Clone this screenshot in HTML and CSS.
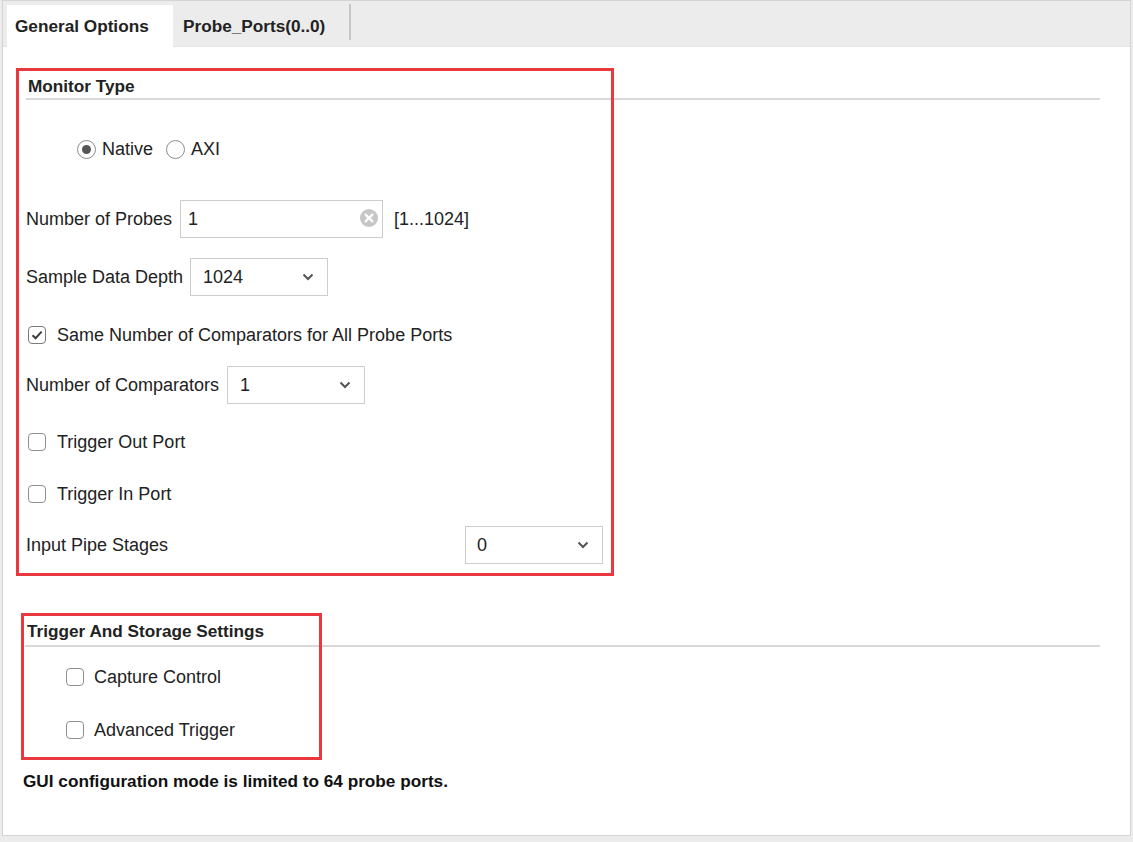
FILE: index.html
```html
<!DOCTYPE html>
<html lang="en">
<head>
<meta charset="utf-8">
<title>General Options</title>
<link rel="stylesheet" href="styles.css">
</head>
<body>
<div class="window">
  <div class="tabstrip">
    <div class="tab tab-active">General Options</div>
    <div class="tab tab-probes">Probe_Ports(0..0)</div>
    <div class="tab-sep"></div>
  </div>

  <div class="content">
    <section class="group group-monitor">
      <div class="group-title">Monitor Type</div>
      <div class="group-rule"></div>

      <div class="row row-radio">
        <span class="radio radio-on"></span><span class="radio-label">Native</span>
        <span class="radio radio-axi"></span><span class="radio-label">AXI</span>
      </div>

      <div class="row row-probes">
        <span class="label label-probes">Number of Probes</span>
        <div class="textbox">
          <span class="textbox-value">1</span>
          <svg class="clear-icon" width="18" height="18" viewBox="0 0 18 18">
            <circle cx="9" cy="9" r="9" fill="#c6c6c6"/>
            <path d="M5.6 5.6 L12.4 12.4 M12.4 5.6 L5.6 12.4" stroke="#fff" stroke-width="2.2" stroke-linecap="round"/>
          </svg>
        </div>
        <span class="range">[1...1024]</span>
      </div>

      <div class="row row-depth">
        <span class="label label-depth">Sample Data Depth</span>
        <div class="select"><span>1024</span>
          <svg class="chev" width="12" height="8" viewBox="0 0 12 8"><path d="M1.5 1.5 L6 6 L10.5 1.5" fill="none" stroke="#555" stroke-width="2"/></svg>
        </div>
      </div>

      <div class="row row-same">
        <span class="checkbox checkbox-on">
          <svg width="14" height="14" viewBox="0 0 14 14"><path d="M2.5 7.2 L5.6 10.2 L11.6 3.6" fill="none" stroke="#3d3d3d" stroke-width="2"/></svg>
        </span>
        <span class="check-label">Same Number of Comparators for All Probe Ports</span>
      </div>

      <div class="row row-comp">
        <span class="label label-comp">Number of Comparators</span>
        <div class="select"><span>1</span>
          <svg class="chev" width="12" height="8" viewBox="0 0 12 8"><path d="M1.5 1.5 L6 6 L10.5 1.5" fill="none" stroke="#555" stroke-width="2"/></svg>
        </div>
      </div>

      <div class="row row-tout">
        <span class="checkbox"></span>
        <span class="check-label">Trigger Out Port</span>
      </div>

      <div class="row row-tin">
        <span class="checkbox"></span>
        <span class="check-label">Trigger In Port</span>
      </div>

      <div class="row row-pipe">
        <span class="label">Input Pipe Stages</span>
        <div class="select select-pipe"><span>0</span>
          <svg class="chev" width="12" height="8" viewBox="0 0 12 8"><path d="M1.5 1.5 L6 6 L10.5 1.5" fill="none" stroke="#555" stroke-width="2"/></svg>
        </div>
      </div>
    </section>

    <section class="group group-trigger">
      <div class="group-title">Trigger And Storage Settings</div>
      <div class="group-rule rule-trigger"></div>

      <div class="row row-capture">
        <span class="checkbox"></span>
        <span class="check-label">Capture Control</span>
      </div>
      <div class="row row-adv">
        <span class="checkbox"></span>
        <span class="check-label">Advanced Trigger</span>
      </div>
    </section>

    <p class="note">GUI configuration mode is limited to 64 probe ports.</p>
  </div>
</div>
</body>
</html>
```

FILE: styles.css
```css
* { box-sizing: border-box; }

html, body {
  margin: 0;
  padding: 0;
}

body {
  background: #ececec;
  font-family: "Liberation Sans", Arial, sans-serif;
  font-size: 18px;
  color: #222;
  width: 1133px;
  height: 842px;
  overflow: hidden;
}

.window {
  margin: 0 2px;
  height: 836px;
  background: #fff;
  border: 1px solid #d4d4d4;
  overflow: hidden;
}

/* tabs */
.tabstrip {
  display: flex;
  align-items: flex-start;
  height: 46px;
  padding: 4px 0 0 4px;
  background: #ececec;
  border-bottom: 1px solid #e4e4e4;
}

.tab {
  height: 42px;
  display: flex;
  align-items: center;
  font-weight: bold;
  font-size: 17.2px;
  color: #222;
  white-space: nowrap;
}

.tab-active {
  width: 166px;
  padding-left: 8px;
  background: #fff;
}

.tab-probes {
  width: 176px;
  padding-left: 10px;
}

.tab-sep {
  width: 2px;
  height: 36px;
  background: #c6c6c6;
  margin-top: -1px;
}

/* content */
.content {
  padding: 21px 0 0 13px;
}

.group {
  outline: 3px solid #e9393f;
  outline-offset: -3px;
}

.group-monitor {
  width: 598px;
  height: 508px;
  padding: 8px 11px 0 10px;
}

.group-title {
  font-weight: bold;
  font-size: 17.2px;
  line-height: 20px;
  height: 20px;
  padding-left: 2px;
  white-space: nowrap;
}

.group-rule {
  width: 1074px;
  height: 2px;
  margin-top: 2px;
  background: #d8d8d8;
}

.row {
  display: flex;
  align-items: center;
  white-space: nowrap;
}

.row-radio { height: 20px; margin-top: 39px; padding-left: 51px; }
.row-probes { height: 38px; margin-top: 41px; }
.row-depth { height: 38px; margin-top: 20px; }
.row-same { height: 20px; margin-top: 29px; padding-left: 2px; }
.row-comp { height: 38px; margin-top: 21px; }
.row-tout { height: 20px; margin-top: 28px; padding-left: 2px; }
.row-tin { height: 20px; margin-top: 32px; padding-left: 2px; }
.row-pipe { height: 38px; margin-top: 22px; justify-content: space-between; }

.label-probes { width: 154px; }
.label-depth { width: 164px; }
.label-comp { width: 201px; }

/* radios */
.radio {
  width: 19px;
  height: 19px;
  border-radius: 50%;
  border: 1.5px solid #8c8c8c;
  display: inline-flex;
  align-items: center;
  justify-content: center;
  background: #fff;
  flex: none;
}

.radio-on::after {
  content: "";
  width: 9px;
  height: 9px;
  border-radius: 50%;
  background: #555;
}

.radio-label { margin-left: 6px; }
.radio-axi { margin-left: 13px; }

/* text box */
.textbox {
  width: 203px;
  height: 38px;
  border: 1px solid #cdcdcd;
  display: flex;
  align-items: center;
  justify-content: space-between;
  padding: 0 4px 0 7px;
}

.clear-icon { margin-top: -2px; }

.range { margin-left: 11px; }

/* selects */
.select {
  width: 138px;
  height: 38px;
  border: 1px solid #cdcdcd;
  display: flex;
  align-items: center;
  justify-content: space-between;
  padding: 0 13px 0 12px;
  background: #fff;
}

.select-pipe { padding-left: 11px; }

/* checkboxes */
.checkbox {
  width: 18px;
  height: 18px;
  border: 1.5px solid #8e8e8e;
  border-radius: 4px;
  display: inline-flex;
  align-items: center;
  justify-content: center;
  background: #fff;
  flex: none;
}

.checkbox-on { border-color: #7a7a7a; }

.check-label { margin-left: 11px; }

/* trigger group */
.group-trigger {
  margin-top: 37px;
  margin-left: 5px;
  width: 301px;
  height: 147px;
  padding: 8px 0 0 4px;
}

.rule-trigger {
  width: 1075px;
  margin-top: 4px;
}

.row-capture { height: 20px; margin-top: 20px; padding-left: 41px; }
.row-adv { height: 20px; margin-top: 33px; padding-left: 41px; }

.row-capture .check-label,
.row-adv .check-label { margin-left: 10px; }

.note {
  margin: 11px 0 0 7px;
  font-weight: bold;
  font-size: 17.2px;
  line-height: 20px;
  color: #111;
}
```
